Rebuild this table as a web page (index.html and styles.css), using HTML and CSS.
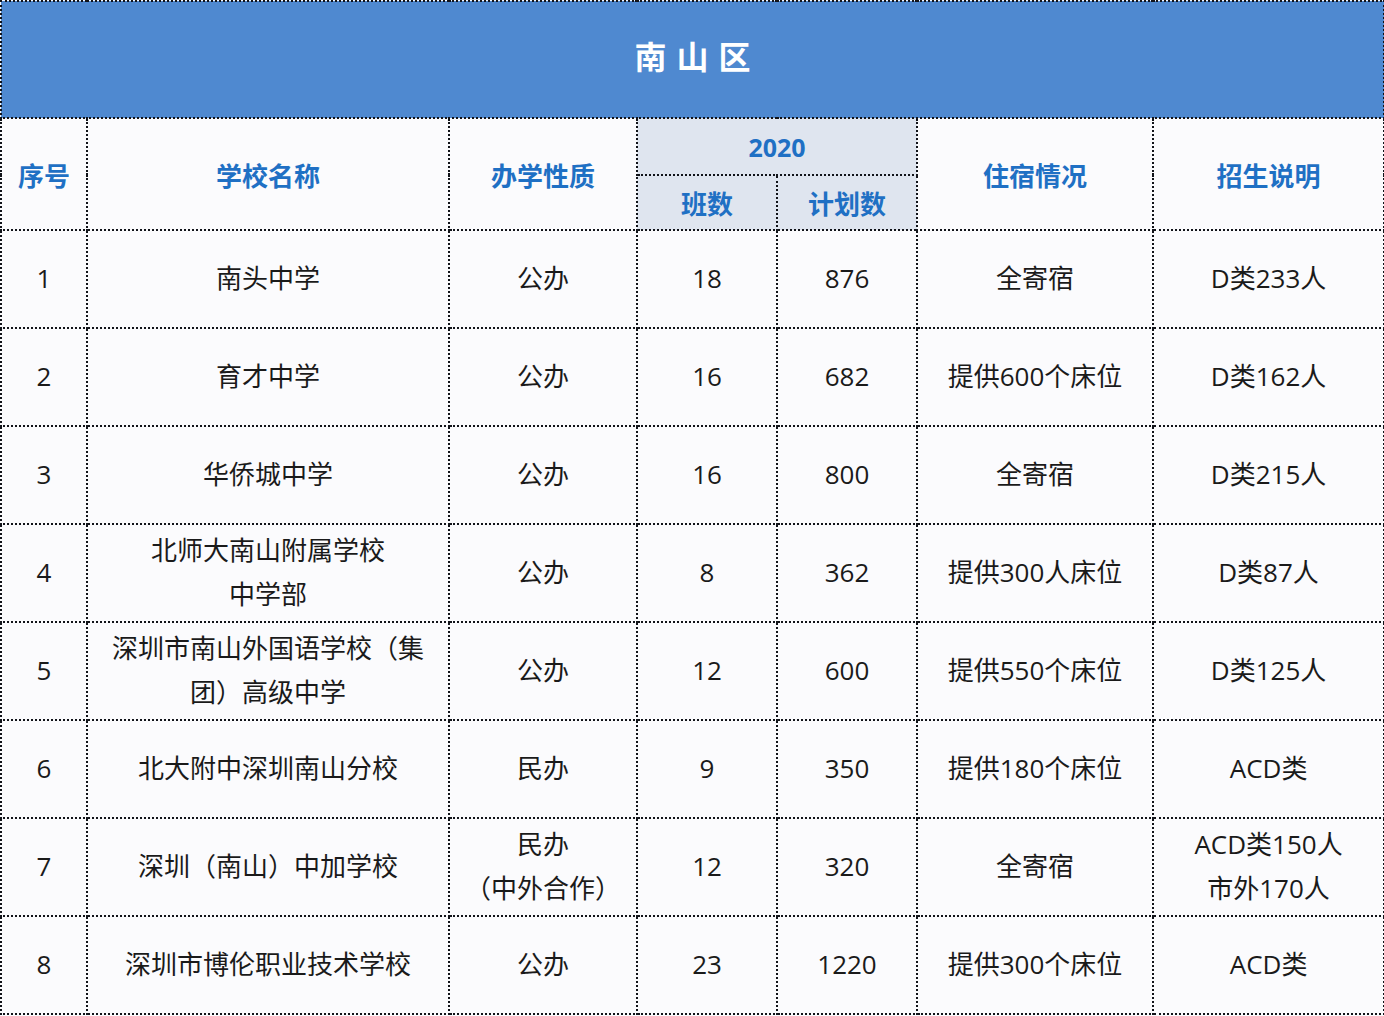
FILE: index.html
```html
<!DOCTYPE html>
<html lang="zh-CN">
<head>
<meta charset="utf-8">
<title>南山区</title>
<link rel="stylesheet" href="styles.css">
</head>
<body>
<table class="sheet">
  <colgroup>
    <col class="c-no"><col class="c-name"><col class="c-type"><col class="c-cls"><col class="c-plan"><col class="c-dorm"><col class="c-note">
  </colgroup>
  <thead>
    <tr class="title-row"><th colspan="7" class="title">南山区</th></tr>
    <tr class="head-row1">
      <th rowspan="2" class="hd">序号</th>
      <th rowspan="2" class="hd">学校名称</th>
      <th rowspan="2" class="hd">办学性质</th>
      <th colspan="2" class="hd sub year">2020</th>
      <th rowspan="2" class="hd">住宿情况</th>
      <th rowspan="2" class="hd">招生说明</th>
    </tr>
    <tr class="head-row2">
      <th class="hd sub">班数</th>
      <th class="hd sub">计划数</th>
    </tr>
  </thead>
  <tbody>
    <tr><td>1</td><td>南头中学</td><td>公办</td><td>18</td><td>876</td><td>全寄宿</td><td>D类233人</td></tr>
    <tr><td>2</td><td>育才中学</td><td>公办</td><td>16</td><td>682</td><td>提供600个床位</td><td>D类162人</td></tr>
    <tr><td>3</td><td>华侨城中学</td><td>公办</td><td>16</td><td>800</td><td>全寄宿</td><td>D类215人</td></tr>
    <tr><td>4</td><td>北师大南山附属学校<br>中学部</td><td>公办</td><td>8</td><td>362</td><td>提供300人床位</td><td>D类87人</td></tr>
    <tr><td>5</td><td>深圳市南山外国语学校（集<br>团）高级中学</td><td>公办</td><td>12</td><td>600</td><td>提供550个床位</td><td>D类125人</td></tr>
    <tr><td>6</td><td>北大附中深圳南山分校</td><td>民办</td><td>9</td><td>350</td><td>提供180个床位</td><td>ACD类</td></tr>
    <tr><td>7</td><td>深圳（南山）中加学校</td><td>民办<br>（中外合作）</td><td>12</td><td>320</td><td>全寄宿</td><td>ACD类150人<br>市外170人</td></tr>
    <tr><td>8</td><td>深圳市博伦职业技术学校</td><td>公办</td><td>23</td><td>1220</td><td>提供300个床位</td><td>ACD类</td></tr>
  </tbody>
</table>
</body>
</html>
```

FILE: styles.css
```css
html, body {
  margin: 0;
  padding: 0;
  background: #fbfbfd;
}
body {
  font-family: "Open Sans", "Noto Sans CJK SC", sans-serif;
  color: #1a1a1a;
}
.sheet {
  border-collapse: collapse;
  table-layout: fixed;
  width: 1383px;
}
.c-no { width: 86px; }
.c-name { width: 362px; }
.c-type { width: 188px; }
.c-cls { width: 140px; }
.c-plan { width: 140px; }
.c-dorm { width: 236px; }
.c-note { width: 231px; }

.sheet th, .sheet td {
  border: 2px dotted #111319;
  text-align: center;
  vertical-align: middle;
  padding: 0;
}
.title-row { height: 117px; }
.sheet .title {
  background: #4f89d0;
  color: #ffffff;
  font-family: "Noto Sans CJK SC", sans-serif;
  font-size: 32px;
  line-height: 40px;
  font-weight: 700;
  letter-spacing: 10px;
  text-indent: 10px;
  vertical-align: top;
  padding-top: 33px;
}
.head-row1 { height: 57px; }
.head-row2 { height: 55px; }
.hd {
  color: #1f70c4;
  font-size: 26px;
  font-weight: 700;
  background: #fbfbfd;
  font-family: "Noto Sans CJK SC", sans-serif;
}
.sub {
  background: #dfe5ef;
}
.sheet .year {
  font-family: "Open Sans", "Noto Sans CJK SC", sans-serif;
  font-size: 25px;
  line-height: 34px;
  vertical-align: top;
  padding-top: 11px;
}
.sheet td {
  height: 93px;
  font-size: 26px;
  line-height: 44px;
  background: #fbfbfd;
  font-weight: 400;
  padding-bottom: 3px;
}
```
